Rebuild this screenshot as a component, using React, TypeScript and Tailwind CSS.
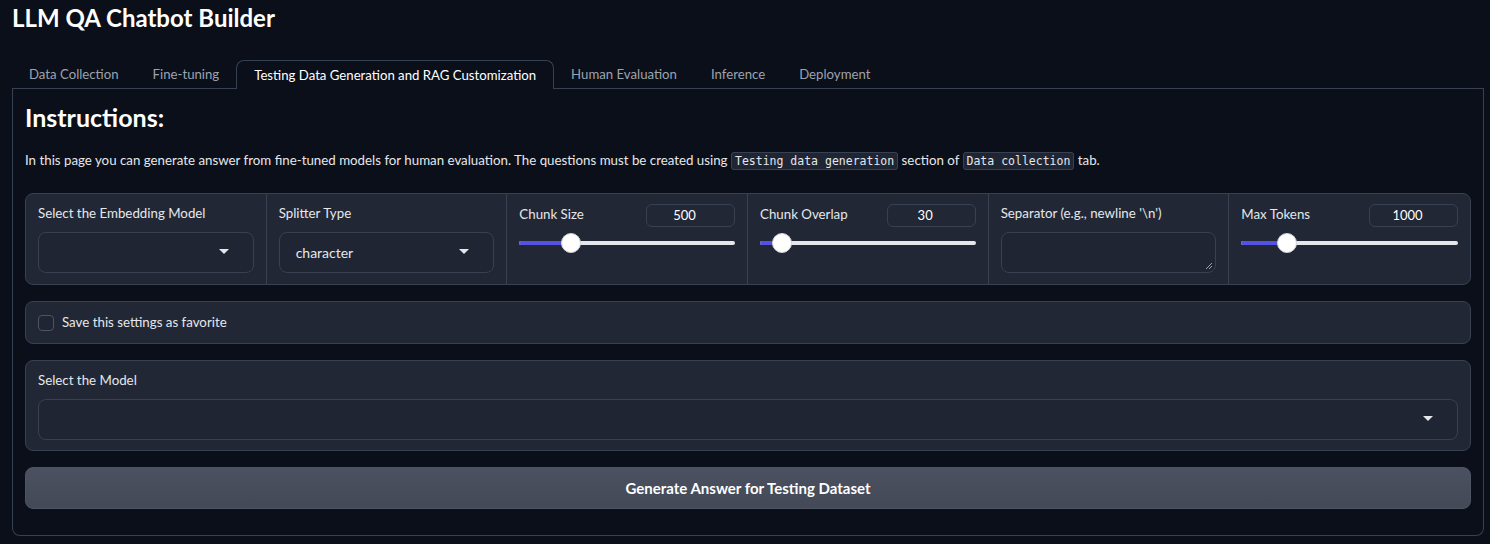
import React from "react"

const font = { fontFamily: "Lato, 'Liberation Sans', sans-serif" }
const mono = { fontFamily: "'DejaVu Sans Mono', monospace" }

function Caret() {
    return (
        <svg width="10" height="6" viewBox="0 0 10 6" className="shrink-0">
            <path d="M0 0 L10 0 L5 5 Z" fill="#e5e7eb" />
        </svg>
    )
}

function Dropdown({ value }: { value?: string }) {
    return (
        <div className="flex items-center justify-between h-[41px] rounded-lg border border-[#374151] bg-[#1f2533] pl-4 pr-6 text-[14px] text-[#e5e7eb]">
            <span>{value ?? ""}</span>
            <Caret />
        </div>
    )
}

function SliderField({ label, value, pct }: { label: string; value: string; pct: number }) {
    return (
        <div className="flex flex-col px-3 pt-[10px]">
            <div className="flex items-start justify-between">
                <span className="text-[13.3px] text-[#e5e7eb] mt-[1px]">{label}</span>
                <div className="w-[89px] h-[23px] rounded-md border border-[#374151] flex items-center justify-center pr-3 text-[13px] text-white">
                    {value}
                </div>
            </div>
            <div className="relative mt-[6px] h-[20px] flex items-center">
                <div className="w-full h-[4px] rounded-full bg-[#e5e7eb]" />
                <div className="absolute left-0 h-[4px] rounded-l-full bg-[#5651e5]" style={{ width: pct + "%" }} />
                <div
                    className="absolute w-[20px] h-[20px] rounded-full bg-white border border-[#d1d5db] -translate-x-1/2"
                    style={{ left: pct + "%" }}
                />
            </div>
        </div>
    )
}

export default function App() {
    const tabs = ["Data Collection", "Fine-tuning", "Testing Data Generation and RAG Customization", "Human Evaluation", "Inference", "Deployment"]
    return (
        <div className="w-[1490px] h-[544px] bg-[#0b0f19] overflow-hidden" style={font}>
            <div className="pl-3 pr-[6px] pt-[3px]">
                <h1 className="text-[24px] font-bold text-white leading-[30px]">LLM QA Chatbot Builder</h1>
                <div className="flex mt-[27px] h-[29px] items-end">
                    {tabs.map((t, i) =>
                        i === 2 ? (
                            <div key={t} className="h-full px-[17px] pt-[1px] flex items-center text-[13.2px] text-white border border-b-0 border-[#374151] rounded-t-lg">
                                {t}
                            </div>
                        ) : (
                            <div key={t} className="h-full px-[17px] pt-[1px] flex items-center text-[13.2px] text-[#9ca3af] border-b border-[#374151]">
                                {t}
                            </div>
                        )
                    )}
                    <div className="flex-1 border-b border-[#374151] h-full" />
                </div>
                <div className="border border-t-0 border-[#374151] rounded-b-lg h-[447px] px-3 pt-[14px]">
                    <h2 className="text-[25px] font-bold text-white leading-[28px]">Instructions:</h2>
                    <p className="mt-[19px] text-[13.3px] text-[#e5e7eb] leading-[20px]">
                        In this page you can generate answer from fine-tuned models for human evaluation. The questions must be created using{" "}
                        <code className="px-[3px] py-[1px] rounded-[3px] border border-[#374151] bg-[#1f2533] text-[11.5px]" style={mono}>
                            Testing data generation
                        </code>{" "}
                        section of{" "}
                        <code className="px-[3px] py-[1px] rounded-[3px] border border-[#374151] bg-[#1f2533] text-[11.5px]" style={mono}>
                            Data collection
                        </code>{" "}
                        tab.
                    </p>

                    <div className="mt-[22px] grid grid-cols-6 h-[92px] rounded-lg border border-[#374151] bg-[#222736] divide-x divide-[#374151]">
                        <div className="flex flex-col gap-[8px] px-3 pt-[10px]">
                            <span className="text-[13.3px] text-[#e5e7eb]">Select the Embedding Model</span>
                            <Dropdown />
                        </div>
                        <div className="flex flex-col gap-[8px] px-3 pt-[10px]">
                            <span className="text-[13.3px] text-[#e5e7eb]">Splitter Type</span>
                            <Dropdown value="character" />
                        </div>
                        <SliderField label="Chunk Size" value="500" pct={24} />
                        <SliderField label="Chunk Overlap" value="30" pct={10} />
                        <div className="flex flex-col gap-[8px] px-3 pt-[10px]">
                            <span className="text-[13.3px] text-[#e5e7eb]">Separator (e.g., newline '\n')</span>
                            <div className="relative h-[41px] rounded-lg border border-[#374151] bg-[#1f2533]">
                                <svg width="8" height="8" viewBox="0 0 8 8" className="absolute right-[2px] bottom-[2px]">
                                    <path d="M7 1 L1 7 M7 4 L4 7" stroke="#9ca3af" strokeWidth="1" />
                                </svg>
                            </div>
                        </div>
                        <SliderField label="Max Tokens" value="1000" pct={21} />
                    </div>

                    <div className="mt-[16px] h-[43px] rounded-lg border border-[#374151] bg-[#222736] flex items-center px-3 gap-[8px]">
                        <div className="w-[16px] h-[16px] rounded-[4px] border border-[#4b5563] bg-[#1f2533]" />
                        <span className="text-[13.3px] text-[#e5e7eb]">Save this settings as favorite</span>
                    </div>

                    <div className="mt-[16px] h-[91px] rounded-lg border border-[#374151] bg-[#222736] px-3 pt-[10px] flex flex-col gap-[8px]">
                        <span className="text-[13.3px] text-[#e5e7eb]">Select the Model</span>
                        <Dropdown />
                    </div>

                    <button className="mt-[16px] w-full h-[42px] rounded-lg border border-[#4b5563] bg-gradient-to-b from-[#4b5160] to-[#434957] text-[15px] font-bold text-white">
                        Generate Answer for Testing Dataset
                    </button>
                </div>
            </div>
        </div>
    )
}
